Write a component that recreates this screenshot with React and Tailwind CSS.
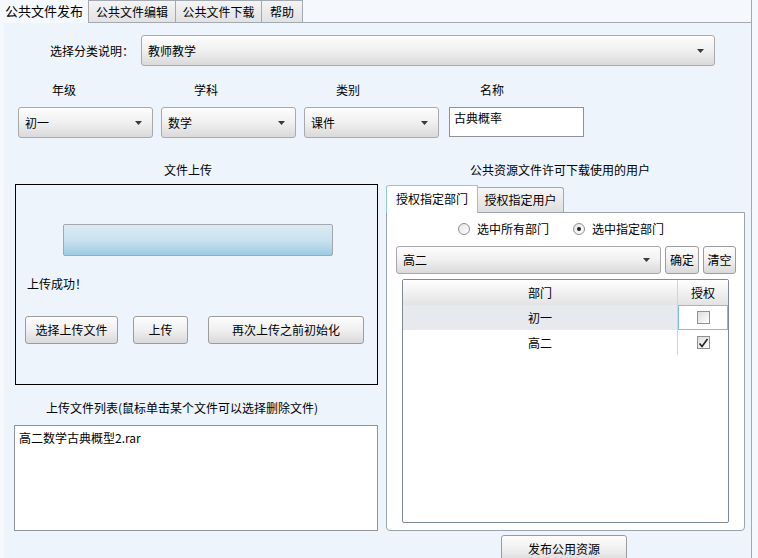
import React from 'react';

function Arrow() {
  return (
    <svg width="7" height="4" viewBox="0 0 7 4" className="shrink-0">
      <path d="M0 0 L7 0 L3.5 4 Z" fill="#3a3a3a" />
    </svg>
  );
}

function Combo({ value, className }) {
  return (
    <div className={`flex items-center justify-between pl-[6px] pr-[10px] border border-[#a9a9a9] rounded-[3px] bg-linear-to-b from-[#fdfdfd] via-[#f0f0f0] to-[#dadada] ${className}`}>
      <span>{value}</span>
      <Arrow />
    </div>
  );
}

function Btn({ children, className }) {
  return (
    <div className={`flex items-center justify-center border border-[#9c9c9c] rounded-[3px] bg-linear-to-b from-[#fdfdfd] via-[#f0f0f0] to-[#d9d9d9] ${className}`}>
      {children}
    </div>
  );
}

function Radio({ checked, label }) {
  return (
    <div className="flex items-center gap-[7px]">
      <div className="w-[12px] h-[12px] rounded-full border border-[#8e8f8f] bg-linear-to-br from-[#e4e4e4] to-[#ffffff] flex items-center justify-center">
        {checked && <div className="w-[4px] h-[4px] rounded-full bg-[#222]" />}
      </div>
      <span>{label}</span>
    </div>
  );
}

function Check({ checked }) {
  return (
    <div className="w-[13px] h-[13px] border border-[#8f8f8f] bg-linear-to-br from-[#dcdcdc] to-[#ffffff] flex items-center justify-center">
      {checked && (
        <svg width="11" height="10" viewBox="0 0 11 10">
          <path d="M1.5 5.5 L4 8.5 L9.5 1" fill="none" stroke="#222" strokeWidth="1.6" />
        </svg>
      )}
    </div>
  );
}

export default function App() {
  return (
    <div className="w-[758px] h-[558px] overflow-hidden bg-[#f5f9fd] text-[12px] leading-[14px] text-black font-['Noto_Sans_CJK_SC','Liberation_Sans',sans-serif]">
      {/* top tabs */}
      <div className="flex h-[23px]">
        <div className="w-[88px] flex items-center justify-center text-[13px] pb-[2px]">公共文件发布</div>
        <div className="w-[88px] flex items-center justify-center border border-[#a3a9b1] bg-linear-to-b from-[#f4f4f4] to-[#e2e2e2] h-[23px]">公共文件编辑</div>
        <div className="w-[86px] flex items-center justify-center border border-l-0 border-[#a3a9b1] bg-linear-to-b from-[#f4f4f4] to-[#e2e2e2] h-[23px]">公共文件下载</div>
        <div className="w-[41px] flex items-center justify-center border border-l-0 border-[#a3a9b1] bg-linear-to-b from-[#f4f4f4] to-[#e2e2e2] h-[23px]">帮助</div>
        <div className="w-[449px] border-b border-r border-[#a3a9b1]" />
      </div>

      {/* main panel */}
      <div className="ml-[4px] w-[748px] h-[535px] bg-[#edf4fc] border-r border-[#a3a9b1]">
        {/* row 1 */}
        <div className="flex items-center pt-[12px]">
          <div className="w-[130px] text-right">选择分类说明：</div>
          <Combo value="教师教学" className="ml-[7px] w-[574px] h-[31px]" />
        </div>

        {/* row 2 */}
        <div className="flex pt-[17px] pl-[14px]">
          <div className="flex flex-col w-[143px]">
            <div className="pl-[34px] h-[14px]">年级</div>
            <Combo value="初一" className="mt-[10px] w-[135px] h-[31px]" />
          </div>
          <div className="flex flex-col w-[143px]">
            <div className="pl-[33px] h-[14px]">学科</div>
            <Combo value="数学" className="mt-[10px] w-[135px] h-[31px]" />
          </div>
          <div className="flex flex-col w-[145px]">
            <div className="pl-[32px] h-[14px]">类别</div>
            <Combo value="课件" className="mt-[10px] w-[135px] h-[31px]" />
          </div>
          <div className="flex flex-col">
            <div className="pl-[31px] h-[14px]">名称</div>
            <div className="mt-[10px] w-[135px] h-[30px] border border-[#8e9399] bg-white pl-[4px] pt-[3px]">古典概率</div>
          </div>
        </div>

        {/* lower section */}
        <div className="flex pt-[25px]">
          {/* left column */}
          <div className="ml-[10px] w-[364px] flex flex-col">
            <div className="pl-[150px] h-[14px]">文件上传</div>
            <div className="mt-[7px] ml-[1px] w-[363px] h-[201px] border border-black flex flex-col">
              <div className="mt-[39px] ml-[47px] w-[270px] h-[32px] border border-[#a4a8ac] rounded-[2px] bg-linear-to-b from-[#dcebf3] via-[#c9e2ef] to-[#9ecbe3]" />
              <div className="mt-[21px] ml-[11px]">上传成功！</div>
              <div className="mt-[25px] ml-[9px] flex">
                <Btn className="w-[93px] h-[28px]">选择上传文件</Btn>
                <Btn className="ml-[15px] w-[55px] h-[28px]">上传</Btn>
                <Btn className="ml-[20px] w-[156px] h-[28px]">再次上传之前初始化</Btn>
              </div>
            </div>
            <div className="mt-[16px] pl-[32px] h-[14px]">上传文件列表(鼠标单击某个文件可以选择删除文件)</div>
            <div className="mt-[10px] w-[364px] h-[106px] border border-[#8e9399] bg-white pl-[4px] pt-[5px]">高二数学古典概型2.rar</div>
          </div>

          {/* right column */}
          <div className="ml-[8px] w-[359px] flex flex-col">
            <div className="pl-[84px] h-[14px]">公共资源文件许可下载使用的用户</div>
            <div className="mt-[7px] flex items-end h-[28px]">
              <div className="w-[92px] h-[28px] border border-b-0 border-[#8ccbd6] rounded-tl-[3px] bg-white flex items-center justify-center pb-[2px] relative z-10 -mb-px">授权指定部门</div>
              <div className="w-[86px] h-[25px] border border-l-0 border-b-0 border-[#a3a9b1] rounded-tr-[3px] bg-linear-to-b from-[#f6f6f6] to-[#dedede] flex items-center justify-center">授权指定用户</div>
            </div>
            <div className="w-[359px] h-[319px] border border-[#9aa4ae] rounded-b-[4px] bg-white flex flex-col">
              <div className="mt-[9px] flex items-center h-[14px] ml-[71px] gap-[24px]">
                <Radio label="选中所有部门" />
                <Radio checked label="选中指定部门" />
              </div>
              <div className="mt-[10px] ml-[9px] flex gap-[4px]">
                <Combo value="高二" className="w-[265px] h-[28px]" />
                <Btn className="w-[34px] h-[28px]">确定</Btn>
                <Btn className="w-[33px] h-[28px]">清空</Btn>
              </div>
              <div className="mt-[5px] ml-[15px] w-[327px] h-[244px] border border-[#7d8a96] rounded-[2px] flex flex-col">
                <div className="flex h-[25px] bg-linear-to-b from-[#ffffff] to-[#e3e3e3]">
                  <div className="w-[275px] flex items-center justify-center border-r border-[#d0d4d8]">部门</div>
                  <div className="flex-1 flex items-center justify-center">授权</div>
                </div>
                <div className="flex h-[25px]">
                  <div className="w-[275px] flex items-center justify-center bg-[#e6e9ed] border-r border-[#d0d4d8]">初一</div>
                  <div className="flex-1 flex items-center justify-center border border-[#7ec3d2]">
                    <Check />
                  </div>
                </div>
                <div className="flex h-[25px]">
                  <div className="w-[275px] flex items-center justify-center border-r border-[#d0d4d8]">高二</div>
                  <div className="flex-1 flex items-center justify-center">
                    <Check checked />
                  </div>
                </div>
              </div>
            </div>
            <div className="mt-[4px] ml-[115px]">
              <Btn className="w-[126px] h-[28px]">发布公用资源</Btn>
            </div>
          </div>
        </div>
      </div>
    </div>
  );
}
